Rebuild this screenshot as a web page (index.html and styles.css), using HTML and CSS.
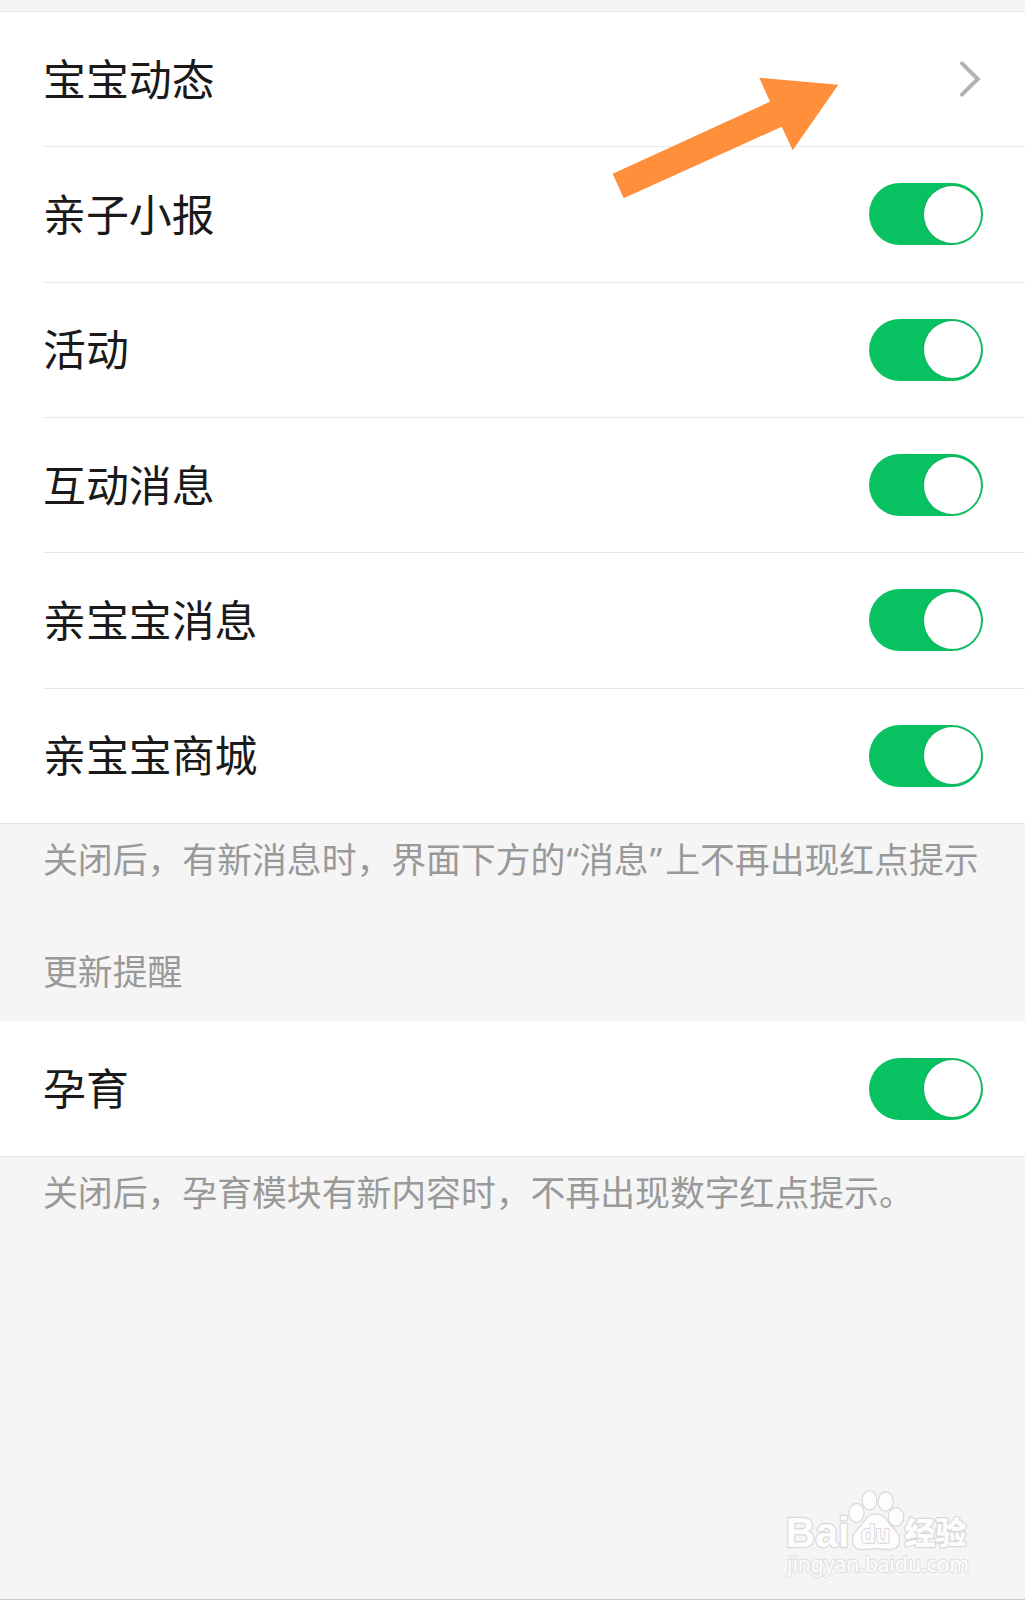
FILE: index.html
```html
<!DOCTYPE html>
<html lang="zh-CN">
<head>
<meta charset="utf-8">
<title>消息提醒</title>
<link rel="stylesheet" href="styles.css">
</head>
<body>
<main class="page">
  <section class="group">
    <div class="row"><span class="label">宝宝动态</span>
      <svg class="chevron" viewBox="0 0 24 38" aria-hidden="true"><path d="M3 3.4 18.800 19 3 34.600"/></svg>
    </div>
    <div class="row"><span class="label">亲子小报</span><span class="switch"><i class="knob"></i></span></div>
    <div class="row"><span class="label">活动</span><span class="switch"><i class="knob"></i></span></div>
    <div class="row"><span class="label">互动消息</span><span class="switch"><i class="knob"></i></span></div>
    <div class="row"><span class="label">亲宝宝消息</span><span class="switch"><i class="knob"></i></span></div>
    <div class="row"><span class="label">亲宝宝商城</span><span class="switch"><i class="knob"></i></span></div>
  </section>
  <p class="note">关闭后，有新消息时，界面下方的<span class="quote">“</span>消息<span class="quote quote-end">”</span>上不再出现红点提示</p>
  <h2 class="heading">更新提醒</h2>
  <section class="group group-single">
    <div class="row"><span class="label">孕育</span><span class="switch"><i class="knob"></i></span></div>
  </section>
  <p class="note">关闭后，孕育模块有新内容时，不再出现数字红点提示。</p>

  <svg class="pointer" viewBox="0 0 230 126" aria-hidden="true">
    <path d="M2.7 98.7 160 26.7 149.3 2.7 228.3 9.7 182.7 75.3 171.7 51.7 13.7 123.3Z"/>
  </svg>

  <svg class="watermark" viewBox="0 0 195 100">
    <text class="wm-brand" x="5.500" y="62" textLength="64" lengthAdjust="spacingAndGlyphs">Bai</text>
    <g class="wm-paw">
      <ellipse cx="76.5" cy="28" rx="7" ry="9"/>
      <ellipse cx="89.5" cy="15.3" rx="6.8" ry="9.2"/>
      <ellipse cx="105.7" cy="16.5" rx="7" ry="9"/>
      <ellipse cx="116" cy="32" rx="7" ry="8.8"/>
      <path d="M95.5 29.5C103 29.5 106.5 35 109 39C112.5 44.5 119 47.5 119 55C119 61 115 64 109 64C104 64 101 63 96 63C91 63 87 64 82 64C76 64 73 60 73 55C73 48 79 44 83 39C86 35 88.5 29.5 95.500 29.5Z"/>
    </g>
    <text class="wm-du" x="81" y="57.5" textLength="29" lengthAdjust="spacingAndGlyphs">du</text>
    <text class="wm-cn" x="124.5" y="59" textLength="62" lengthAdjust="spacingAndGlyphs">经验</text>
    <text class="wm-url" x="7" y="86.5" textLength="182" lengthAdjust="spacingAndGlyphs">jingyan.baidu.com</text>
  </svg>
</main>
</body>
</html>
```
FILE: styles.css
```css
* {
  box-sizing: border-box;
}

body {
  margin: 0;
  background: #f5f5f5;
  font-family: "Noto Sans CJK SC", sans-serif;
}

.page {
  position: relative;
  height: 1600px;
  padding-top: 11px;
  border-bottom: 1px solid #c8c8c8;
  overflow: hidden;
}

.group {
  height: 813px;
  border-top: 1px solid #e9e9e9;
  border-bottom: 1px solid #e4e4e4;
  background: #fff;
  display: flex;
  flex-direction: column;
}

.group-single {
  height: 136px;
  border-top: 0;
}

.row {
  flex: 1;
  margin-left: 43px;
  padding-right: 42px;
  display: flex;
  align-items: center;
  justify-content: space-between;
}

.row + .row {
  border-top: 1px solid #e9e9e9;
}

.label {
  padding-bottom: 5px;
  font-size: 42.9px;
  line-height: 64px;
  color: #1a1a1a;
}

.chevron {
  width: 24px;
  height: 38px;
  fill: none;
  stroke: #b2b2b2;
  stroke-width: 4;
  stroke-linecap: round;
}

.switch {
  width: 114px;
  height: 62px;
  padding: 0 2.5px;
  border-radius: 31px;
  background: #08c160;
  display: flex;
  align-items: center;
  justify-content: flex-end;
}

.knob {
  width: 57px;
  height: 57px;
  border-radius: 50%;
  background: #fff;
  box-shadow: 0 0 2px rgba(60, 120, 100, 0.5);
}

.note,
.heading {
  margin: 0;
  padding-left: 43px;
  font-size: 34.85px;
  font-weight: 400;
  line-height: 50px;
  color: #999;
  white-space: nowrap;
}

.note {
  padding-top: 9px;
}

.quote {
  padding-left: 1px;
  font-family: "Noto Sans", sans-serif;
  line-height: 1;
}

.quote-end {
  padding-right: 3px;
}

.heading {
  padding-top: 62px;
  padding-bottom: 26px;
}

.pointer {
  position: absolute;
  left: 610px;
  top: 75px;
  width: 230px;
  height: 126px;
  fill: #ff8f3b;
}

.watermark {
  position: absolute;
  left: 780px;
  top: 1485px;
  width: 195px;
  height: 100px;
  fill: #fdfdfd;
  stroke: #d9d9d9;
  stroke-width: 2.4;
  stroke-linejoin: round;
  paint-order: stroke;
}

.wm-brand {
  font: 700 42px "Liberation Sans", sans-serif;
}

.wm-paw {
  stroke-width: 2.4;
}

.wm-du {
  font: 700 25px "Liberation Sans", sans-serif;
  stroke-width: 2;
}

.wm-cn {
  font: 900 31px "Noto Sans CJK SC", sans-serif;
}

.wm-url {
  font: 400 22px "Noto Sans", sans-serif;
  stroke: #e2e2e2;
}
```
